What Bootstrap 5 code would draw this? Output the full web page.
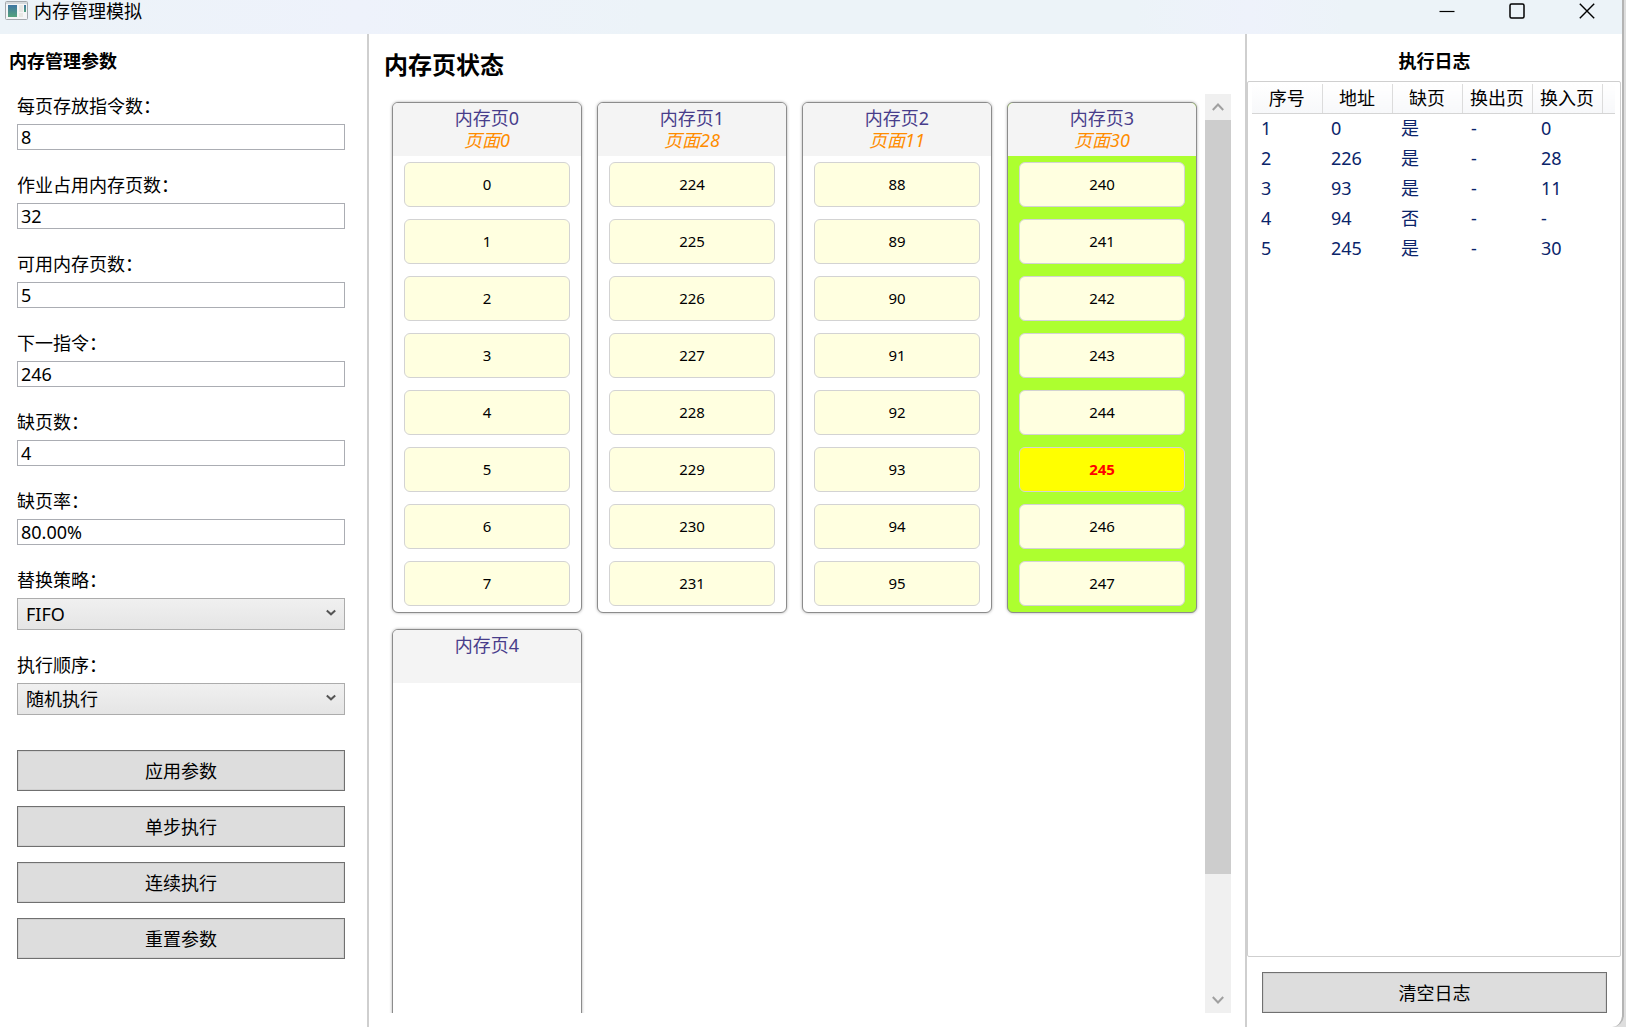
<!DOCTYPE html>
<html lang="zh-CN">
<head>
<meta charset="utf-8">
<meta name="viewport" content="width=device-width, initial-scale=1">
<title>内存管理模拟</title>
<link href="https://cdn.jsdelivr.net/npm/bootstrap@5.3.0/dist/css/bootstrap.min.css" rel="stylesheet">
<style>
  body { font-family: "Noto Sans", "Noto Sans CJK SC", sans-serif; font-size: 18px; line-height: 24px; color: #000; background: #dedede; }
  .app-window { margin-right: 2px; border-right: 2px solid #b4b4b4; border-bottom-right-radius: 12px; background: #fff; }
  .title-bar { height: 34px; line-height: 22px; padding-left: 5px; gap: 6px; background: linear-gradient(90deg, #ecf3f8, #eef2fb 22%, #ecf3f8 40%, #ecf3f8 70%, #eef2fb 77%, #ecf3f8 83%); }
  .win-btn { width: 70px; height: 22px; padding: 0; border: 0; background: none; line-height: 0; }
  .win-btn svg { display: block; margin: auto; }
  .params { flex: 0 0 369px; border-right: 2px solid #cfcfcf; padding: 15px 22px 0 17px; }
  .section-title { font-size: 18px; line-height: 24px; font-weight: 700; margin: 0; }
  .params .section-title { margin: 0 0 21px -8px; }
  .params .form-label { display: block; margin: 0 0 6px; line-height: 24px; }
  .field-row { margin-bottom: 23px; }
  .params .form-control { height: 26px; padding: 0 3px; border: 1px solid #abadb3; border-radius: 0; font-size: 18px; line-height: 24px; color: #000; }
  .params .form-select { height: 32px; padding: 0 30px 0 8px; border: 1px solid #acacac; border-radius: 0; font-size: 18px; line-height: 30px; color: #000; background: linear-gradient(#f0f0f0, #e5e5e5); }
  .select-box { position: relative; }
  .select-box svg { position: absolute; right: 9px; top: 11px; pointer-events: none; }
  .btn-classic { height: 41px; padding: 0; border: 1px solid #707070; border-radius: 0; background: #ddd; color: #000; font-size: 18px; line-height: 24px; box-shadow: inset 0 0 0 1px #d0d0d0; }
  .btn-stack { gap: 15px; padding-top: 12px; }
  .pages { padding: 15px 14px 14px 15px; min-width: 0; }
  .pages-title { font-size: 24px; line-height: 32px; font-weight: 700; margin: 0 0 13px; }
  .page-grid { display: grid; grid-template-columns: repeat(4, 1fr); gap: 16px 15px; padding: 8px; min-width: 0; align-content: start; }
  .page-frame { min-height: 511px; border: 1px solid #8c8c8c; border-radius: 6px; overflow: hidden; background: #fff; box-shadow: 0 0 3px #aaa; }
  .page-frame.active-frame { background: #adff2f; }
  .page-head { height: 53px; padding-top: 4px; background: #f4f4f4; line-height: 22px; color: #483d8b; }
  .page-no { font-style: italic; color: #ff8c00; }
  .cell-list { gap: 12px; padding: 6px 11px; }
  .cell { height: 45px; border: 1px solid #d3d3d3; border-radius: 6px; background: #ffffe0; font-size: 15px; line-height: 43px; text-align: center; }
  .cell.current { background: #ff0; color: #f00; font-weight: 700; }
  .v-scroll { flex: 0 0 26px; background: #f0f0f0; }
  .v-scroll button { width: 26px; height: 26px; padding: 0; border: 0; background: none; }
  .v-scroll svg { display: block; margin: auto; }
  .v-track { flex: 1 1 0; }
  .v-thumb { height: 87%; background: #cdcdcd; }
  .log { flex: 0 0 377px; border-left: 2px solid #cfcfcf; padding-top: 15px; }
  .log-list { margin: 8px 1px 0 0; padding: 2px 5px 0 4px; border: 1px solid #cfcfcf; border-radius: 2px; }
  .log-table { width: 100%; table-layout: fixed; }
  .log-table th { height: 29px; padding: 0; font-weight: 400; text-align: center; border-right: 1px solid #dcdcdc; border-bottom: 1px solid #d5d5d5; background: linear-gradient(#fff, #f7f8fa); white-space: nowrap; }
  .log-table th:last-child { border-right: 0; }
  .log-table td { height: 30px; padding: 0 0 0 9px; color: #0a246a; }
  .col-num { width: 70px; }
  .log-foot { padding: 15px 15px 14px; }
</style>
</head>
<body>
<div class="app-window d-flex flex-column vh-100 overflow-hidden">
  <header class="title-bar d-flex align-items-start flex-shrink-0">
    <svg width="23" height="20" viewBox="0 0 23 20" aria-hidden="true">
      <defs><linearGradient id="pane" x1="0" y1="0" x2="0" y2="1"><stop offset="0" stop-color="#3f76a3"/><stop offset="1" stop-color="#55a37c"/></linearGradient></defs>
      <rect x="0.5" y="1.5" width="22" height="18" rx="1" fill="#f5f6f7" stroke="#a3a8ad"/>
      <rect x="1" y="2" width="21" height="2" fill="#d5d9dc"/>
      <rect x="3" y="5" width="9" height="12" fill="url(#pane)"/>
      <rect x="14" y="5" width="4" height="7" fill="#e8e8e4"/><rect x="14" y="13" width="4" height="4" fill="#e8e8e4"/>
      <rect x="19" y="5" width="2" height="7" fill="url(#pane)"/>
    </svg>
    <span>内存管理模拟</span>
    <div class="ms-auto d-flex">
      <button class="win-btn" type="button" aria-label="最小化"><svg width="16" height="16" viewBox="0 0 16 16"><path d="M.5 8.500h15" stroke="#000" stroke-width="1.200"/></svg></button>
      <button class="win-btn" type="button" aria-label="最大化"><svg width="16" height="16" viewBox="0 0 16 16"><rect x="1" y="1" width="14" height="14" rx="1.500" fill="none" stroke="#000" stroke-width="1.500"/></svg></button>
      <button class="win-btn" type="button" aria-label="关闭"><svg width="16" height="16" viewBox="0 0 16 16"><path d="M.8.8l14.400 14.400M15.200.8L.8 15.200" stroke="#000" stroke-width="1.400"/></svg></button>
    </div>
  </header>

  <main class="d-flex flex-grow-1 overflow-hidden">
    <form class="params">
      <h2 class="section-title">内存管理参数</h2>
      <div class="field-row"><label class="form-label" for="perPage">每页存放指令数：</label><input class="form-control" id="perPage" value="8"></div>
      <div class="field-row"><label class="form-label" for="jobPages">作业占用内存页数：</label><input class="form-control" id="jobPages" value="32"></div>
      <div class="field-row"><label class="form-label" for="freePages">可用内存页数：</label><input class="form-control" id="freePages" value="5"></div>
      <div class="field-row"><label class="form-label" for="nextOp">下一指令：</label><input class="form-control" id="nextOp" value="246"></div>
      <div class="field-row"><label class="form-label" for="faults">缺页数：</label><input class="form-control" id="faults" value="4"></div>
      <div class="field-row"><label class="form-label" for="faultRate">缺页率：</label><input class="form-control" id="faultRate" value="80.00%"></div>
      <div class="field-row"><label class="form-label" for="policy">替换策略：</label>
        <div class="select-box"><select class="form-select" id="policy"><option>FIFO</option></select><svg width="10" height="8" viewBox="0 0 10 8"><path d="M.8 1.500L5 5.300 9.200 1.500" fill="none" stroke="#555" stroke-width="2"/></svg></div></div>
      <div class="field-row"><label class="form-label" for="order">执行顺序：</label>
        <div class="select-box"><select class="form-select" id="order"><option>随机执行</option></select><svg width="10" height="8" viewBox="0 0 10 8"><path d="M.8 1.500L5 5.300 9.200 1.500" fill="none" stroke="#555" stroke-width="2"/></svg></div></div>
      <div class="btn-stack d-flex flex-column">
        <button class="btn btn-classic" type="button">应用参数</button>
        <button class="btn btn-classic" type="button">单步执行</button>
        <button class="btn btn-classic" type="button">连续执行</button>
        <button class="btn btn-classic" type="button">重置参数</button>
      </div>
    </form>

    <section class="pages d-flex flex-column flex-grow-1">
      <h1 class="pages-title">内存页状态</h1>
      <div class="d-flex flex-grow-1 overflow-hidden">
        <div class="page-grid flex-grow-1 overflow-hidden">
          <article class="page-frame">
            <div class="page-head text-center"><div>内存页0</div><div class="page-no">页面0</div></div>
            <div class="cell-list d-flex flex-column"><div class="cell">0</div><div class="cell">1</div><div class="cell">2</div><div class="cell">3</div><div class="cell">4</div><div class="cell">5</div><div class="cell">6</div><div class="cell">7</div></div>
          </article>
          <article class="page-frame">
            <div class="page-head text-center"><div>内存页1</div><div class="page-no">页面28</div></div>
            <div class="cell-list d-flex flex-column"><div class="cell">224</div><div class="cell">225</div><div class="cell">226</div><div class="cell">227</div><div class="cell">228</div><div class="cell">229</div><div class="cell">230</div><div class="cell">231</div></div>
          </article>
          <article class="page-frame">
            <div class="page-head text-center"><div>内存页2</div><div class="page-no">页面11</div></div>
            <div class="cell-list d-flex flex-column"><div class="cell">88</div><div class="cell">89</div><div class="cell">90</div><div class="cell">91</div><div class="cell">92</div><div class="cell">93</div><div class="cell">94</div><div class="cell">95</div></div>
          </article>
          <article class="page-frame active-frame">
            <div class="page-head text-center"><div>内存页3</div><div class="page-no">页面30</div></div>
            <div class="cell-list d-flex flex-column"><div class="cell">240</div><div class="cell">241</div><div class="cell">242</div><div class="cell">243</div><div class="cell">244</div><div class="cell current">245</div><div class="cell">246</div><div class="cell">247</div></div>
          </article>
          <article class="page-frame">
            <div class="page-head text-center"><div>内存页4</div></div>
          </article>
        </div>
        <div class="v-scroll d-flex flex-column">
          <button type="button" aria-label="向上滚动"><svg width="12" height="10" viewBox="0 0 12 10"><path d="M.8 8L6 2.500 11.200 8" fill="none" stroke="#a0a0a0" stroke-width="2"/></svg></button>
          <div class="v-track"><div class="v-thumb"></div></div>
          <button type="button" aria-label="向下滚动"><svg width="12" height="10" viewBox="0 0 12 10"><path d="M.8 2L6 7.500 11.200 2" fill="none" stroke="#a0a0a0" stroke-width="2"/></svg></button>
        </div>
      </div>
    </section>

    <aside class="log d-flex flex-column">
      <h2 class="section-title text-center">执行日志</h2>
      <div class="log-list flex-grow-1">
        <table class="log-table">
          <colgroup><col class="col-num"><col class="col-num"><col class="col-num"><col class="col-num"><col class="col-num"><col></colgroup>
          <thead><tr><th>序号</th><th>地址</th><th>缺页</th><th>换出页</th><th>换入页</th><th></th></tr></thead>
          <tbody>
            <tr><td>1</td><td>0</td><td>是</td><td>-</td><td>0</td></tr>
            <tr><td>2</td><td>226</td><td>是</td><td>-</td><td>28</td></tr>
            <tr><td>3</td><td>93</td><td>是</td><td>-</td><td>11</td></tr>
            <tr><td>4</td><td>94</td><td>否</td><td>-</td><td>-</td></tr>
            <tr><td>5</td><td>245</td><td>是</td><td>-</td><td>30</td></tr>
          </tbody>
        </table>
      </div>
      <div class="log-foot"><button class="btn btn-classic w-100 d-block" type="button">清空日志</button></div>
    </aside>
  </main>
</div>
<script src="https://cdn.jsdelivr.net/npm/bootstrap@5.3.0/dist/js/bootstrap.bundle.min.js"></script>
</body>
</html>
